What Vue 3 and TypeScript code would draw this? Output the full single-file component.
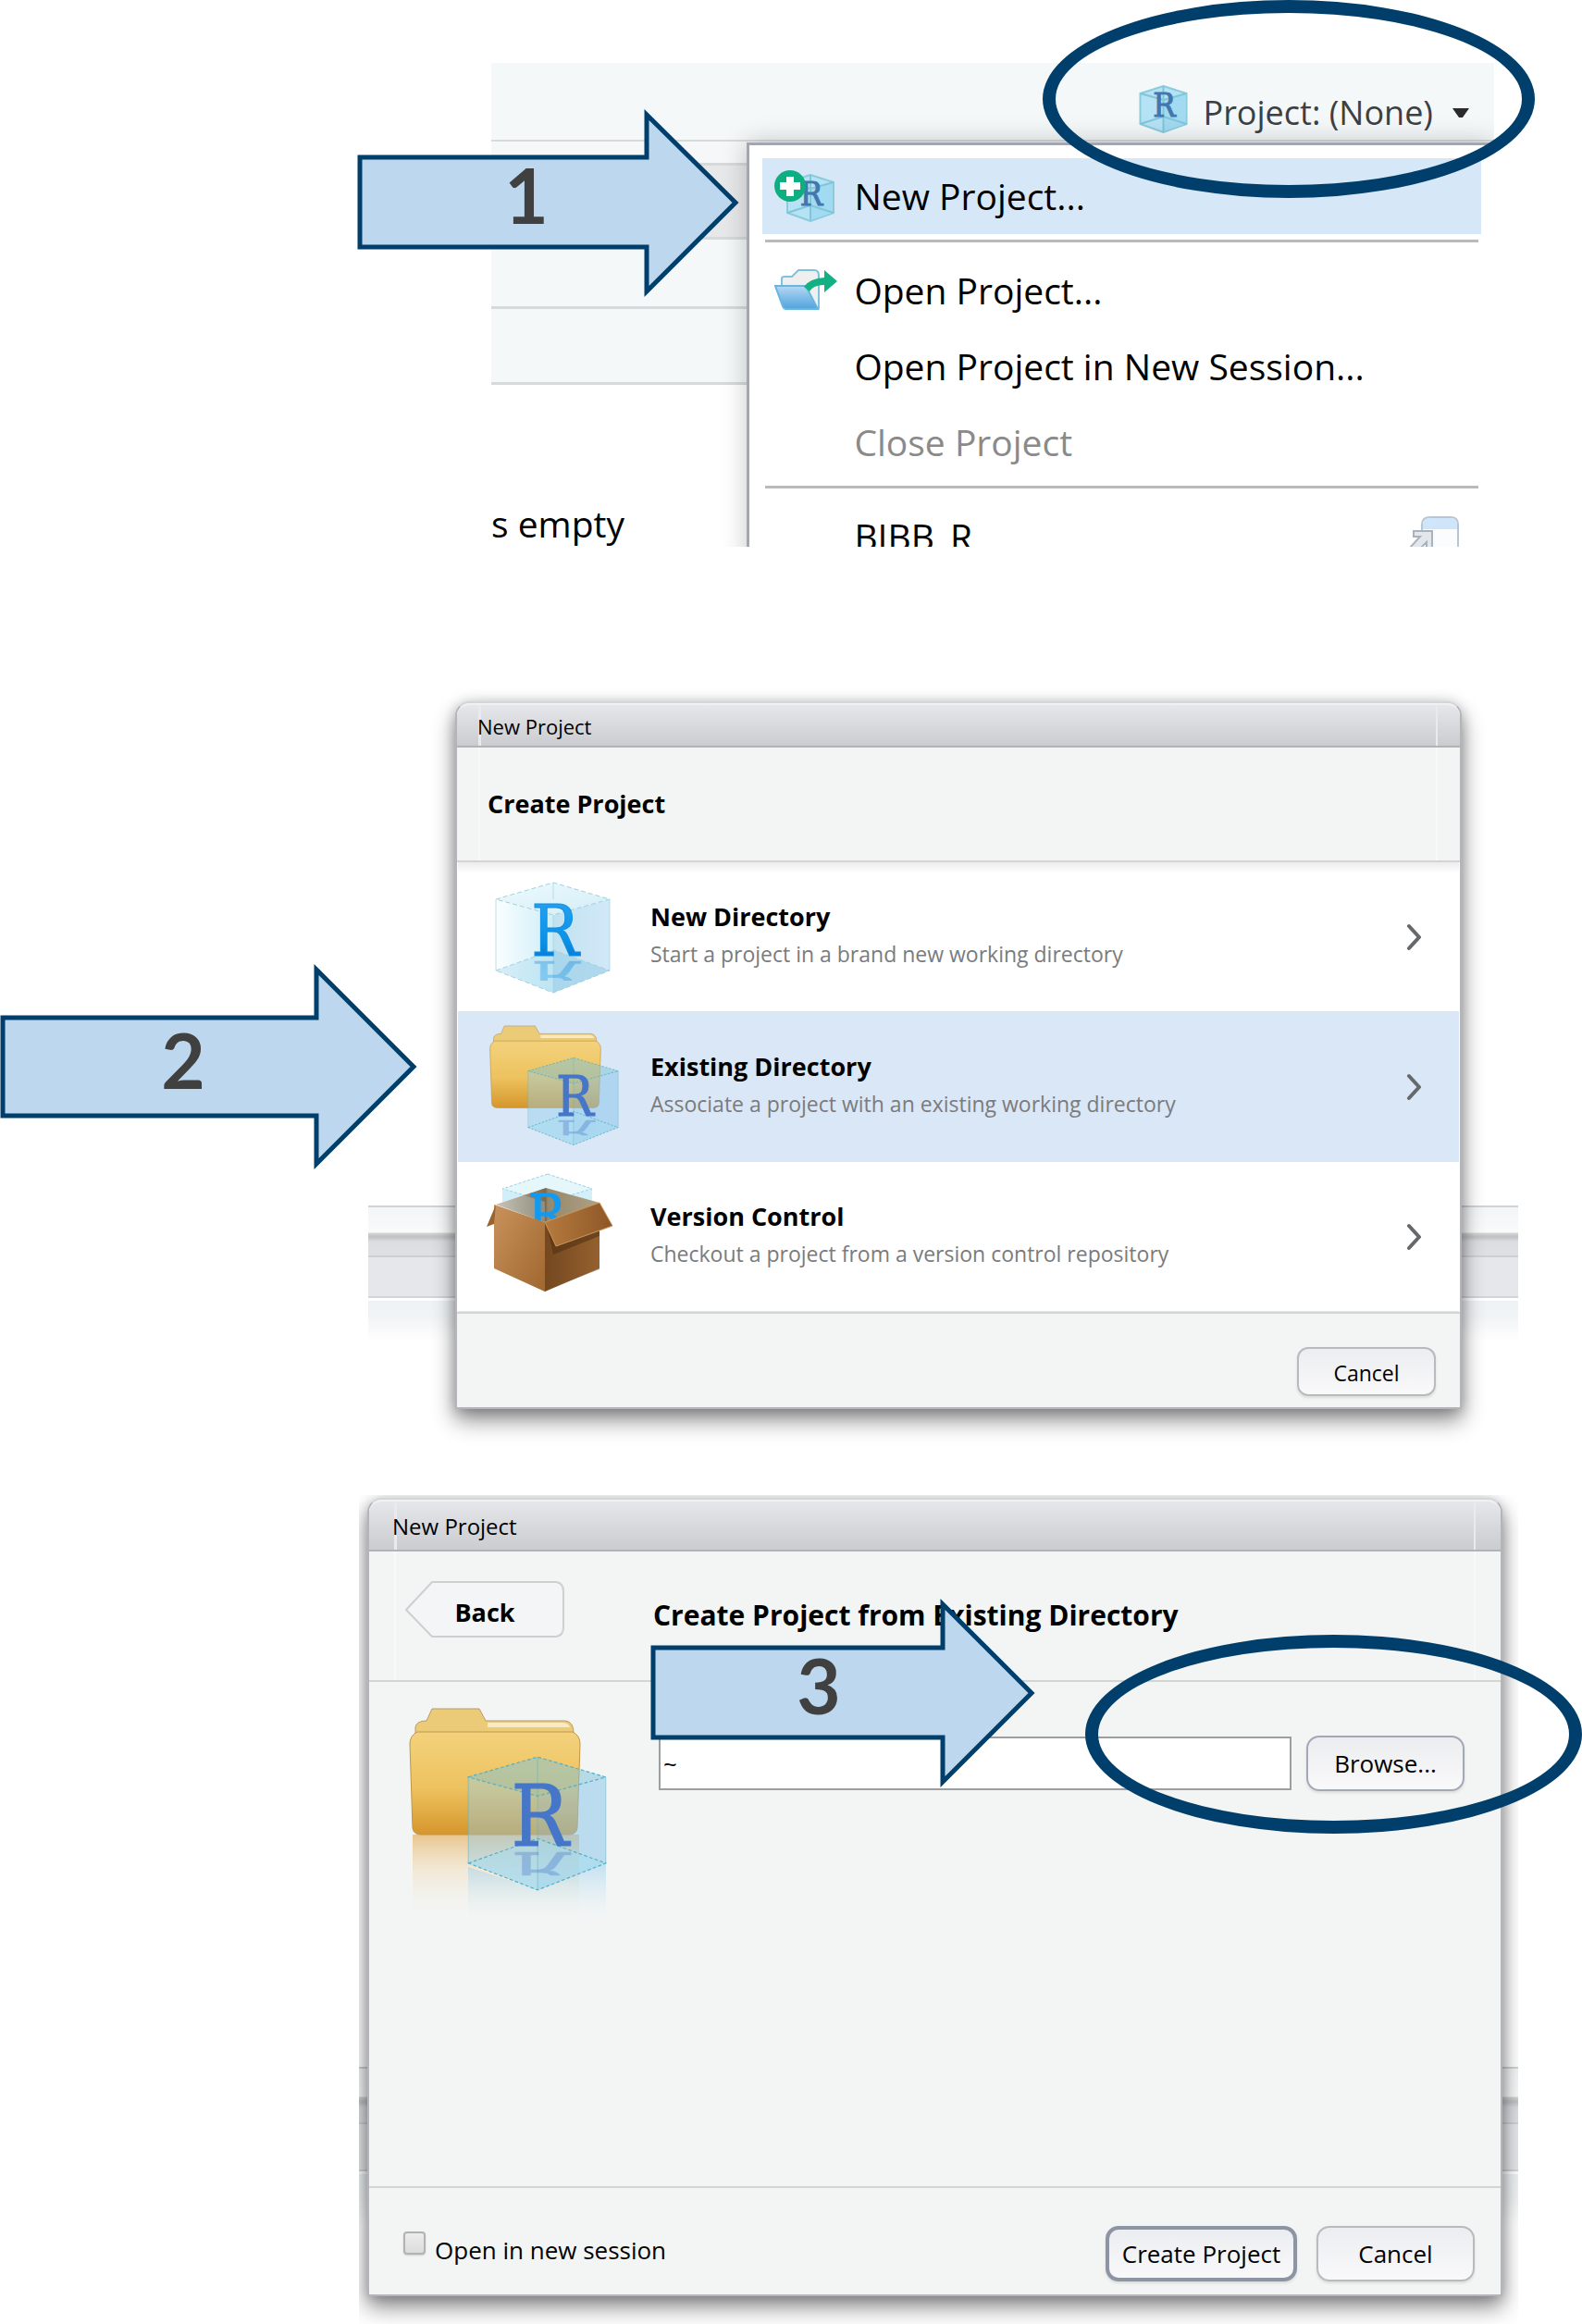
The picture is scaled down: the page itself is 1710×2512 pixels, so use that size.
<script setup lang="ts">
import { ref } from 'vue'

interface ProjectKind {
  icon: 'new' | 'existing' | 'vcs'
  title: string
  description: string
}

const kinds: ProjectKind[] = [
  { icon: 'new', title: 'New Directory', description: 'Start a project in a brand new working directory' },
  { icon: 'existing', title: 'Existing Directory', description: 'Associate a project with an existing working directory' },
  { icon: 'vcs', title: 'Version Control', description: 'Checkout a project from a version control repository' },
]

const selected = ref<ProjectKind['icon']>('existing')
const directory = ref('~')
const openInNewSession = ref(false)
</script>

<template>
  <main class="page">
    <!-- Shared drawings -->
    <svg class="defs" width="0" height="0" aria-hidden="true">
      <defs>
        <linearGradient id="cubeLeft" x1="0" y1="0" x2="1" y2="0">
          <stop offset="0" stop-color="#fafeff" />
          <stop offset="1" stop-color="#cdeef7" />
        </linearGradient>
        <linearGradient id="cubeRight" x1="0" y1="0" x2="1" y2="0">
          <stop offset="0" stop-color="#c2e2ef" />
          <stop offset="1" stop-color="#d2e8f9" />
        </linearGradient>
        <linearGradient id="cubeTop" x1="0" y1="0" x2="1" y2="1">
          <stop offset="0" stop-color="#eefbfe" />
          <stop offset="1" stop-color="#d3ecf6" />
        </linearGradient>
        <linearGradient id="letterBlue" x1="0" y1="0" x2="0" y2="1">
          <stop offset="0" stop-color="#2ea3f2" />
          <stop offset="0.6" stop-color="#0a93e6" />
          <stop offset="1" stop-color="#0a6cc8" />
        </linearGradient>
        <linearGradient id="folderFront" x1="0" y1="0" x2="0" y2="1">
          <stop offset="0" stop-color="#f3d27c" />
          <stop offset="0.55" stop-color="#edc25f" />
          <stop offset="1" stop-color="#d6962c" />
        </linearGradient>
        <linearGradient id="folderFade" x1="0" y1="0" x2="0" y2="1">
          <stop offset="0" stop-color="#e3a64a" stop-opacity="0.6" />
          <stop offset="0.4" stop-color="#efcf9c" stop-opacity="0.35" />
          <stop offset="1" stop-color="#f3f5f4" stop-opacity="0" />
        </linearGradient>
        <linearGradient id="glassFade" x1="0" y1="0" x2="0" y2="1">
          <stop offset="0" stop-color="#9fd2ee" stop-opacity="0.6" />
          <stop offset="1" stop-color="#d6ebf7" stop-opacity="0" />
        </linearGradient>
        <linearGradient id="boxLeft" x1="0" y1="0" x2="1" y2="1">
          <stop offset="0" stop-color="#c9925c" />
          <stop offset="1" stop-color="#a0672f" />
        </linearGradient>
        <linearGradient id="boxRight" x1="0" y1="0" x2="1" y2="0">
          <stop offset="0" stop-color="#744820" />
          <stop offset="1" stop-color="#95602e" />
        </linearGradient>
        <linearGradient id="boxFlap" x1="0" y1="0" x2="1" y2="0">
          <stop offset="0" stop-color="#b67a3e" />
          <stop offset="1" stop-color="#8d5726" />
        </linearGradient>
        <linearGradient id="boxInside" x1="0" y1="0" x2="1" y2="0">
          <stop offset="0" stop-color="#c6b8a4" />
          <stop offset="0.48" stop-color="#7a6a50" />
          <stop offset="0.5" stop-color="#96886c" />
          <stop offset="1" stop-color="#b0a183" />
        </linearGradient>
        <linearGradient id="trayBlue" x1="0" y1="0" x2="0" y2="1">
          <stop offset="0" stop-color="#b4d8f4" />
          <stop offset="1" stop-color="#4fa3dc" />
        </linearGradient>

        <symbol id="cube" viewBox="-1 -1 125 121">
          <path d="M0 18 62 35V119L0 95Z" fill="url(#cubeLeft)" />
          <path d="M62 35 123 18V95L62 119Z" fill="url(#cubeRight)" />
          <path d="M62 0 123 18 62 35 0 18Z" fill="url(#cubeTop)" />
          <path d="M62 73 123 95 62 119 0 95Z" fill="#a6d8ee" fill-opacity="0.4" />
          <path d="M62 73 123 95 62 119Z" fill="#8ec8e6" fill-opacity="0.3" />
          <path d="M0 18V95M123 18V95M62 35V119M62 0V18" fill="none" stroke="#a4d3dc" stroke-opacity="0.7" />
          <path
            d="M0 18 62 0 123 18 62 35ZM0 95 62 73 123 95 62 119Z"
            fill="none" stroke="#9fd2da" stroke-width="1" stroke-dasharray="5 3"
          />
          <text x="64" y="79" class="cube-letter" font-size="76" text-anchor="middle">R</text>
          <svg x="30" y="84" width="70" height="22" viewBox="30 84 70 22">
            <text x="64" y="-142" transform="scale(1 -0.6)" class="cube-letter" opacity="0.35" font-size="76" text-anchor="middle">R</text>
          </svg>
        </symbol>

        <symbol id="glass-cube" viewBox="-1 -1 125 121">
          <path d="M0 18 62 0 123 18V95L62 119 0 95Z" fill="#8ecdee" fill-opacity="0.42" />
          <path d="M62 0 123 18 62 35 0 18Z" fill="#5fb0a8" fill-opacity="0.16" />
          <path d="M62 35 123 18V95L62 119Z" fill="#78b4e2" fill-opacity="0.16" />
          <path d="M62 73 123 95 62 119 0 95Z" fill="#a4dcf0" fill-opacity="0.5" />
          <path d="M0 18V95M123 18V95M62 0V119" fill="none" stroke="#5fb3bd" stroke-opacity="0.45" />
          <path
            d="M0 18 62 0 123 18 62 35ZM0 95 62 73 123 95 62 119Z"
            fill="none" stroke="#54b0c4" stroke-width="1" stroke-dasharray="3 2"
          />
          <text x="64" y="79" class="glass-letter" font-size="76" text-anchor="middle">R</text>
          <svg x="30" y="84" width="70" height="22" viewBox="30 84 70 22">
            <text x="64" y="-142" transform="scale(1 -0.6)" class="glass-letter" opacity="0.35" font-size="76" text-anchor="middle">R</text>
          </svg>
        </symbol>

        <symbol id="folder" viewBox="-1 -1 186 139">
          <path
            d="M6 34V20Q7 13 18 13L24 0H75L82 13H168Q177 14 177 26V40H6Z"
            fill="#eccb78" stroke="#b79a68" stroke-width="1"
          />
          <path d="M84 15H166Q172 16 173 20H84Z" fill="#faeac2" />
          <path
            d="M8 25H176Q184 29 184 38L181 129Q180 136 172 136H12Q4 136 3 129L0 38Q0 29 8 25Z"
            fill="url(#folderFront)" stroke="#c09646" stroke-width="1"
          />
        </symbol>

        <symbol id="mini-cube" viewBox="0 0 52 52">
          <path d="M26 1 51 9V42L26 51 1 42V9Z" fill="#b5e2f4" stroke="#8acbdc" stroke-width="2" />
          <path d="M26 16 50 9V42L26 50Z" fill="#a2daf2" />
          <path d="M1 9 26 16 51 9M26 1V50M1 42 26 34 51 42" fill="none" stroke="#7fc6d8" stroke-width="2" />
          <text x="27" y="34" class="mini-letter" font-size="36" text-anchor="middle">R</text>
        </symbol>
      </defs>
    </svg>

    <!-- Step 1: the project menu -->
    <section class="step step-menu">
      <div class="ide">
        <header class="ide-bar">
          <button type="button" class="project-button">
            <svg width="53" height="52"><use href="#mini-cube" width="53" height="52" /></svg>
            <span class="project-name">Project: (None)</span>
            <svg class="caret" width="18" height="12" viewBox="0 0 18 12"><path d="M0 1H18L11 11H7Z" fill="#2b2b2b" /></svg>
          </button>
        </header>
        <div class="band band-gap"></div>
        <div class="band band-tabs"></div>
        <div class="band band-tools"></div>
        <div class="band band-path"></div>
        <p class="empty-note">s empty</p>

        <div class="menu" role="menu">
          <button type="button" role="menuitem" class="menu-item active">
            <span class="menu-icon">
              <svg width="66" height="56" viewBox="0 0 66 56">
                <use href="#mini-cube" x="13" y="4" width="52" height="52" />
                <circle cx="17" cy="17" r="17" fill="#0fae80" />
                <path d="M13 7H21V13H28V21H21V28H13V21H6V13H13Z" fill="#fff" />
              </svg>
            </span>New Project...
          </button>
          <hr class="menu-rule" />
          <button type="button" role="menuitem" class="menu-item">
            <span class="menu-icon">
              <svg width="68" height="46" viewBox="0 0 68 46">
                <path d="M8 24V10Q8 8 11 8H19L26 1H43Q48 1 48 7V42H14Z" fill="#efefef" stroke="#7cc3e0" stroke-width="2" />
                <path d="M1 18H34L47 43H13Q10 43 9 40Z" fill="url(#trayBlue)" stroke="#6bb4dd" stroke-width="2" />
                <path d="M32 19Q38 10 54 9V1L68 13 54 25V17Q42 17 38 24Z" fill="#12b082" />
              </svg>
            </span>Open Project...
          </button>
          <button type="button" role="menuitem" class="menu-item"><span class="menu-icon"></span>Open Project in New Session...</button>
          <button type="button" role="menuitem" class="menu-item" disabled><span class="menu-icon"></span>Close Project</button>
          <hr class="menu-rule" />
          <button type="button" role="menuitem" class="menu-item recent">
            <span class="menu-icon"></span>BIBB_R
            <svg class="new-window" width="54" height="44" viewBox="0 0 54 44">
              <path d="M13 44V9Q13 1 22 1H44Q52 1 52 9V44Z" fill="#fafcfd" stroke="#b9c6d2" stroke-width="2" />
              <path d="M14 14V9Q14 2 22 2H44Q51 2 51 9V14Z" fill="#cfe6fa" />
              <path d="M4 16H24V36H18V28L6 40 0 34 11 22H4Z" fill="#e3e6ea" stroke="#a9b3bd" stroke-width="2" />
            </svg>
          </button>
        </div>
      </div>
      <svg class="arrow arrow-1" width="413" height="205" viewBox="0 0 413 205">
        <path d="M3 53H313V7L409 102 313 198V150H3Z" class="arrow-shape" />
        <text x="183" y="125" class="arrow-digit">1</text>
      </svg>
      <div class="ring ring-1"></div>
    </section>

    <!-- Step 2: choose the kind of project -->
    <section class="step step-kind">
      <div class="backdrop">
        <div class="dialog" role="dialog" aria-label="New Project">
          <div class="title-bar">New Project</div>
          <header class="dialog-head"><h2>Create Project</h2></header>
          <div class="kinds">
            <button
              v-for="kind in kinds"
              :key="kind.icon"
              type="button"
              class="kind"
              :class="{ selected: kind.icon === selected }"
              @click="selected = kind.icon"
            >
              <svg v-if="kind.icon === 'new'" class="kind-icon" width="150" height="162" viewBox="0 0 150 162">
                <use href="#cube" x="15" y="21" width="125" height="121" />
              </svg>
              <svg v-else-if="kind.icon === 'existing'" class="kind-icon" width="150" height="162" viewBox="0 0 150 162">
                <use href="#folder" x="9" y="14" width="121" height="91" />
                <use href="#glass-cube" x="50" y="48" width="99" height="97" />
              </svg>
              <svg v-else class="kind-icon" width="150" height="162" viewBox="0 0 150 162">
                <path d="M23 29 72 13 120 29V48L70 66 23 48Z" fill="#d3effa" />
                <path d="M72 13 120 29 72 43 23 29Z" fill="#e6f7fc" stroke="#9bd0de" stroke-dasharray="3 2" />
                <path d="M16 46 70 28 128 44 69 65Z" fill="url(#boxInside)" />
                <path d="M23 29V44L16 46 69 65V43Z" fill="#d0eaf2" fill-opacity="0.25" />
                <svg x="40" y="20" width="60" height="46" viewBox="40 20 60 46">
                  <text x="71" y="78" class="box-letter" font-size="60" text-anchor="middle">R</text>
                </svg>
                <path d="M14 114 69 140 76 136 128 116 128 112 69 138Z" fill="#000" fill-opacity="0.3" />
                <path d="M14 46 69 65V140L14 115Z" fill="url(#boxLeft)" />
                <path d="M69 65 128 44V115L69 140Z" fill="url(#boxRight)" />
                <path d="M72 72 128 72V80L78 100Z" fill="#4e2e12" fill-opacity="0.55" />
                <path d="M69 65 128 44 142 69 81 91Z" fill="url(#boxFlap)" stroke="#c9975f" stroke-width="1" />
                <path d="M16 46 6 70 14 67Z" fill="#9a632f" />
              </svg>
              <span class="kind-text">
                <strong>{{ kind.title }}</strong>
                <span>{{ kind.description }}</span>
              </span>
              <svg class="chevron" width="18" height="30" viewBox="0 0 18 30">
                <path d="M3 3 14 15 3 27" fill="none" stroke="#66696c" stroke-width="4" stroke-linecap="round" stroke-linejoin="round" />
              </svg>
            </button>
          </div>
          <footer class="dialog-foot">
            <button type="button" class="push">Cancel</button>
          </footer>
        </div>
      </div>
      <svg class="arrow arrow-2" width="452" height="224" viewBox="0 0 452 224">
        <path d="M3 59H342V7L447 112 342 217V165H3Z" class="arrow-shape" />
        <text x="198" y="136" class="arrow-digit">2</text>
      </svg>
    </section>

    <!-- Step 3: pick the directory -->
    <section class="step step-path">
      <div class="backdrop">
        <div class="dialog large" role="dialog" aria-label="Create Project from Existing Directory">
          <div class="title-bar">New Project</div>
          <header class="dialog-head">
            <button type="button" class="back">
              <svg width="172" height="61" viewBox="0 0 172 61">
                <path d="M1 31 29 1H163Q171 2 171 11V50Q171 59 163 60H29Z" fill="#f4f5f7" stroke="#cdcfd2" stroke-width="2" />
              </svg>
              <span>Back</span>
            </button>
            <h2>Create Project from Existing Directory</h2>
          </header>
          <div class="path-body">
            <svg class="path-icon" width="214" height="232" viewBox="0 0 214 232">
              <path d="M4 137H184V232H4Z" fill="url(#folderFade)" />
              <use href="#folder" width="186" height="139" />
              <path d="M64 172 139 196 213 168V228H64Z" fill="url(#glassFade)" />
              <use href="#glass-cube" x="63" y="51" width="151" height="148" />
            </svg>
            <form class="path-form" @submit.prevent>
              <input v-model="directory" type="text" class="path-input" aria-label="Project working directory" />
              <button type="button" class="push browse">Browse...</button>
            </form>
          </div>
          <footer class="dialog-foot">
            <label class="session"><input v-model="openInNewSession" type="checkbox" />Open in new session</label>
            <button type="button" class="push primary">Create Project</button>
            <button type="button" class="push">Cancel</button>
          </footer>
        </div>
      </div>
      <svg class="arrow arrow-3" width="416" height="206" viewBox="0 0 416 206">
        <path d="M3 54H316V7L412 103 316 199V151H3Z" class="arrow-shape" />
        <text x="182" y="126" class="arrow-digit">3</text>
      </svg>
      <div class="ring ring-3"></div>
    </section>
  </main>
</template>

<style>
body {
  margin: 0;
  background: #fff;
}
</style>

<style scoped>
.page {
  font-family: "Open Sans", "Noto Sans", sans-serif;
  color: #000;
  overflow: hidden;
}
.defs {
  position: absolute;
}
button {
  font: inherit;
  color: inherit;
  border: 0;
  padding: 0;
  background: none;
  cursor: pointer;
}
svg {
  display: block;
  flex: none;
}
h2 {
  margin: 0;
}
.step {
  position: relative;
  display: grid;
}

/* Letters inside the cubes */
.cube-letter,
.glass-letter,
.box-letter,
.mini-letter {
  font-family: "DejaVu Serif Condensed", "DejaVu Serif", serif;
}
.cube-letter {
  fill: url(#letterBlue);
  stroke: #0f8fe4;
  stroke-width: 1;
}
.glass-letter {
  fill: #4676c8;
  stroke: #4676c8;
  stroke-width: 1;
}
.box-letter {
  fill: #129af0;
  stroke: #129af0;
  stroke-width: 1;
}
.mini-letter {
  fill: #4277ae;
  stroke: #4277ae;
  stroke-width: 1;
}

/* Annotations */
.arrow,
.ring {
  position: absolute;
}
.arrow-shape {
  fill: #bdd7ee;
  stroke: #003f6b;
  stroke-width: 5;
}
.arrow-digit {
  font-family: Lato, sans-serif;
  font-size: 82px;
  font-weight: 700;
  fill: #404040;
  text-anchor: middle;
}
.ring {
  box-sizing: border-box;
  border: 14px solid #003f6b;
  border-radius: 50%;
}
.arrow-1 {
  left: 22.6%;
  top: 117px;
}
.arrow-2 {
  left: 0;
  top: 313px;
}
.arrow-3 {
  left: 41.1%;
  top: 111px;
}
.ring-1 {
  left: 65.9%;
  top: 0;
  width: 31.1%;
  height: 214px;
}
.ring-3 {
  right: 0;
  top: 151px;
  width: 31.4%;
  height: 215px;
}

/* Step 1 */
.step-menu {
  grid-template-columns: 531fr 1084fr 95fr;
  padding-top: 68px;
}
.ide {
  grid-column: 2;
  position: relative;
  height: 523px;
  overflow: hidden;
}
.ide-bar {
  display: flex;
  justify-content: flex-end;
  padding: 24px 27px 0 0;
  background: #f4f8f9;
  border-bottom: 2px solid #d6dadb;
}
.project-button {
  display: flex;
  align-items: flex-start;
  height: 59px;
  font-size: 36px;
  line-height: 60px;
  color: #3c3f44;
}
.project-name {
  margin: 0 21px 0 16px;
}
.caret {
  align-self: center;
}
.band {
  box-sizing: border-box;
  border-bottom: 3px solid #d6dadb;
}
.band-gap {
  height: 26px;
  background: #f6f7f9;
}
.band-tabs {
  height: 80px;
  background: #e7e8ea;
}
.band-tools {
  height: 75px;
  background: #f4f8f9;
}
.band-path {
  height: 82px;
  background: #f4f8f9;
}
.empty-note {
  margin: 123px 0 0;
  font-size: 39px;
  line-height: 54px;
}
.menu {
  position: absolute;
  left: 25.5%;
  right: 0;
  top: 86px;
  padding: 14px 14px 14px 14px;
  background: #fff;
  border: solid #a2a6b1;
  border-width: 3px 0 0 3px;
  box-shadow: 0 0 26px rgba(0, 0, 0, 0.22);
}
.menu-item {
  display: flex;
  align-items: center;
  width: 100%;
  height: 82px;
  padding-left: 13px;
  font-size: 39px;
  line-height: 84px;
  white-space: nowrap;
  text-align: left;
}
.menu-item.active {
  background: #d6e8f7;
}
.menu-item:disabled {
  color: #8a8a8a;
}
.menu-icon {
  flex: none;
  width: 86px;
}
.menu-rule {
  height: 3px;
  margin: 6px 3px 11px;
  border: 0;
  background: #bababa;
}
.new-window {
  margin-left: auto;
  margin-right: 23px;
}

/* Dialogs */
.step-kind {
  grid-template-columns: 398fr 1243fr 69fr;
  margin-top: 137px;
}
.step-path {
  grid-template-columns: 388fr 1253fr 69fr;
}
.backdrop {
  grid-column: 2;
}
.step-kind .backdrop {
  padding: 30px 61px 93px 94px;
  background: linear-gradient(
    transparent 575px, #cdd3d6 575px 577px, #f3f5f7 577px, #f9fafa 604px,
    #d2d4d5 605px, #bfc1c3 609px, #dcdde1 614px, #dfe0e4 629px, #cfd0d3 629px 631px,
    #e6e7ea 631px 673px, #d2d4d7 673px 675px, #fff 675px 678px, #eef2f4 678px, #f1f4f5 695px, #fff 722px
  );
}
.step-path .backdrop {
  padding: 3px 17px 30px 9px;
  overflow: hidden;
  background: linear-gradient(
    transparent 618px, #cdd3d6 618px 620px, #f3f5f7 620px, #f9fafa 650px,
    #d2d4d5 651px, #bfc1c3 656px, #dcdde1 662px, #dfe0e4 678px, #cfd0d3 678px 680px,
    #e6e7ea 680px 729px, #d2d4d7 729px 731px, #fff 731px 734px, #eef2f4 734px, #f1f4f5 760px, #fff 790px
  );
}
.dialog {
  border: 2px solid #b3b5bb;
  border-top-color: #d5d6da;
  border-radius: 16px 16px 0 0;
  background: #f3f5f4;
  box-shadow: 0 12px 24px rgba(0, 0, 0, 0.45), 0 2px 14px rgba(0, 0, 0, 0.2);
}
.title-bar {
  box-sizing: border-box;
  height: 48px;
  padding-left: 22px;
  border-top: 2px solid #f1f1f3;
  border-bottom: 2px solid #b2b3b9;
  border-radius: 14px 14px 0 0;
  /* pale seams where the frame's corner pieces meet its middle */
  background:
    linear-gradient(#e9eaec, #e9eaec) left 23px top / 3px 100% no-repeat,
    linear-gradient(#e9eaec, #e9eaec) right 24px top / 2px 100% no-repeat,
    linear-gradient(#e6e7ea, #cbccd0);
  font-size: 22px;
  line-height: 46px;
}
.large .title-bar {
  height: 56px;
  padding-left: 25px;
  background-position: left 27px top, right 27px top, 0 0;
  font-size: 24px;
  line-height: 54px;
}
.dialog-head {
  padding-left: 33px;
  border-bottom: 2px solid #d3d5d5;
  background:
    linear-gradient(#f8f9f8, #f8f9f8) left 23px top / 2px 100% no-repeat,
    linear-gradient(#f8f9f8, #f8f9f8) right 24px top / 2px 100% no-repeat;
}
.dialog-head h2 {
  font-size: 27px;
  line-height: 122px;
}
.kinds {
  padding: 0 1px;
  background: #fff;
}
.kind {
  box-sizing: border-box;
  display: flex;
  align-items: center;
  width: 100%;
  height: 162px;
  padding: 0 39px 0 25px;
  border-bottom: 1px solid #e3e5e7;
  text-align: left;
}
.kind:first-child {
  background: linear-gradient(#ececec, #fff 12px);
}
.kind.selected {
  background: #dae7f6;
}
.kind-text {
  flex: 1;
  align-self: flex-start;
  display: flex;
  flex-direction: column;
  padding: 38px 0 0 33px;
}
.kind-text strong {
  font-size: 27px;
  line-height: 42px;
}
.kind-text span {
  font-size: 23px;
  line-height: 38px;
  color: #7a7b7d;
}
.dialog-foot {
  display: flex;
  justify-content: flex-end;
  align-items: flex-start;
  padding: 36px 26px 12px;
  border-top: 2px solid #d3d5d5;
}
.push {
  box-sizing: border-box;
  width: 150px;
  height: 53px;
  border: 2px solid #b8babe;
  border-radius: 12px;
  background: linear-gradient(#ecedf0, #f9f9fa);
  box-shadow: 0 2px 3px rgba(0, 0, 0, 0.1);
  font-size: 23px;
  line-height: 53px;
}

.large .dialog-head {
  display: flex;
  align-items: flex-start;
  padding: 32px 0 33px 39px;
  background-position: left 27px top, right 27px top;
}
.large .dialog-head h2 {
  margin-left: 96px;
  font-size: 30px;
  line-height: 74px;
}
.back {
  display: grid;
  font-size: 27px;
  font-weight: 700;
  line-height: 68px;
}
.back > * {
  grid-area: 1 / 1;
}
.path-body {
  display: flex;
  align-items: flex-start;
  min-height: 517px;
  padding: 28px 39px 0 43px;
}
.path-form {
  flex: 1;
  display: flex;
  align-items: center;
  gap: 16px;
  margin: 30px 0 0 56px;
}
.path-input {
  box-sizing: border-box;
  flex: 1;
  min-width: 0;
  height: 58px;
  padding: 0 3px;
  border: 2px solid #9c9e9f;
  background: #fff;
  font: inherit;
  font-size: 26px;
}
.large .push {
  width: 171px;
  height: 60px;
  border-radius: 14px;
  font-size: 26px;
}
.large .browse {
  border-color: #a3a8b5;
}
.large .primary {
  width: 207px;
  border: 4px solid #8d94a3;
}
.large .dialog-foot {
  gap: 21px;
  padding: 41px 28px 14px 37px;
}
.session {
  display: flex;
  align-items: flex-start;
  gap: 10px;
  margin-right: auto;
  font-size: 26px;
  line-height: 53px;
}
.session input {
  appearance: none;
  box-sizing: border-box;
  width: 24px;
  height: 25px;
  margin: 6px 0 0;
  border: 2px solid #b2b2b2;
  border-radius: 4px;
  background: linear-gradient(#ececec, #dcdcdc);
  box-shadow: 0 1px 2px rgba(0, 0, 0, 0.15);
}
</style>
